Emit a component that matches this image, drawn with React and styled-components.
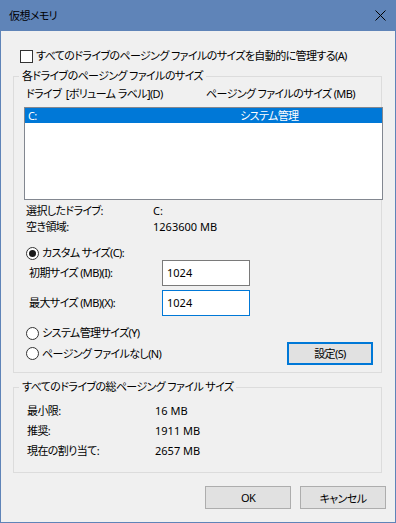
import React from 'react';
import styled, { createGlobalStyle } from 'styled-components';

const GlobalStyle = createGlobalStyle`
  body {
    margin: 0;
    background: #f0f0f0;
  }
  * {
    box-sizing: border-box;
  }
`;

const Window = styled.div`
  width: 396px;
  height: 523px;
  display: flex;
  flex-direction: column;
  background: #f0f0f0;
  border: 1px solid #5f84b8;
  border-top: none;
  font-family: "Noto Sans", "Noto Sans CJK JP", sans-serif;
  font-size: 11px;
  letter-spacing: -0.6px;
  font-feature-settings: "palt";
  color: #000;
`;

const TitleBar = styled.div`
  height: 31px;
  margin: 0 -1px;
  display: flex;
  align-items: center;
  background: #5f84b8;
  padding-left: 9px;
  padding-right: 10px;
`;

const Title = styled.span`
  line-height: 16px;
  flex: 1;
`;

const CloseIcon = () => (
  <svg width="11" height="11" viewBox="0 0 11 11">
    <path d="M0.5 0.5 L10.5 10.5 M10.5 0.5 L0.5 10.5" stroke="#000" strokeWidth="1" fill="none" />
  </svg>
);

const Body = styled.div`
  flex: 1;
  display: flex;
  flex-direction: column;
  padding: 0 9px 0 12px;
`;

const Row = styled.div`
  display: flex;
  align-items: center;
  height: ${p => p.$h || 16}px;
  margin-top: ${p => p.$mt || 0}px;
  padding-left: ${p => p.$pl || 0}px;
  line-height: 16px;
  white-space: nowrap;
`;

const CheckBox = styled.span`
  width: 13px;
  height: 13px;
  border: 1px solid #333;
  background: #fff;
  margin-right: 3px;
  flex-shrink: 0;
`;

const Radio = styled.span`
  width: 13px;
  height: 13px;
  border-radius: 50%;
  border: 1px solid #333;
  background: #fff;
  margin-right: 3px;
  flex-shrink: 0;
  display: flex;
  align-items: center;
  justify-content: center;

  &::after {
    content: '';
    width: 7px;
    height: 7px;
    border-radius: 50%;
    background: ${p => (p.$checked ? '#1a1a1a' : 'transparent')};
  }
`;

const Group = styled.fieldset`
  margin: ${p => p.$mt || 0}px 0 0 0;
  padding: 0 0 ${p => p.$pb}px 10px;
  width: 369px;
  min-width: 0;
  border: 1px solid #dcdcdc;
`;

const Legend = styled.legend`
  margin-left: -5px;
  padding: 0 3px;
  line-height: 16px;
  height: 16px;
`;

const Label = styled.span`
  width: ${p => p.$w}px;
  flex-shrink: 0;
`;

const Value = styled.span`
  letter-spacing: 0;
`;

const ListBox = styled.div`
  margin-top: 5px;
  width: 359px;
  height: 93px;
  border: 1px solid #828790;
  background: #fff;
`;

const ListItem = styled.div`
  display: flex;
  height: 15px;
  line-height: 15px;
  padding-left: 3px;
  background: ${p => (p.$selected ? '#0078d7' : 'transparent')};
  color: ${p => (p.$selected ? '#fff' : '#000')};
`;

const TextBox = styled.div`
  width: 88px;
  height: 26px;
  border: 1px solid ${p => (p.$focused ? '#0078d7' : '#7a7a7a')};
  background: #fff;
  padding-left: 4px;
  display: flex;
  align-items: center;
  letter-spacing: 0;
`;

const Button = styled.button`
  width: 86px;
  height: 23px;
  padding: 0;
  font: inherit;
  letter-spacing: inherit;
  font-feature-settings: "palt";
  color: #000;
  background: #e1e1e1;
  border: ${p => (p.$default ? '2px solid #0078d7' : '1px solid #adadad')};
  margin-left: ${p => (p.$push ? 'auto' : '0')};
  margin-right: ${p => p.$mr || 0}px;
`;

const Footer = styled.div`
  display: flex;
  justify-content: flex-end;
  gap: 9px;
  margin-top: 13px;
`;

const totals = [
  ['最小限:', '16 MB'],
  ['推奨:', '1911 MB'],
  ['現在の割り当て:', '2657 MB'],
];

export default function App() {
  return (
    <>
      <GlobalStyle />
      <Window>
        <TitleBar>
          <Title>仮想メモリ</Title>
          <CloseIcon />
        </TitleBar>
        <Body>
          <Row $mt={17} $pl={7}>
            <CheckBox />
            すべてのドライブのページング ファイルのサイズを自動的に管理する(A)
          </Row>

          <Group $mt={4} $pb={7}>
            <Legend>各ドライブのページング ファイルのサイズ</Legend>
            <Row $mt={2} $pl={2}>
              <Label $w={180}>ドライブ&nbsp;&nbsp;[ボリューム ラベル](D)</Label>
              ページング ファイルのサイズ (MB)
            </Row>
            <ListBox>
              <ListItem $selected>
                <Label $w={212}>C:</Label>
                システム管理
              </ListItem>
            </ListBox>
            <Row $mt={3} $pl={2}>
              <Label $w={127}>選択したドライブ:</Label>
              <Value>C:</Value>
            </Row>
            <Row $pl={2}>
              <Label $w={127}>空き領域:</Label>
              <Value>1263600 MB</Value>
            </Row>
            <Row $mt={11} $h={14} $pl={2}>
              <Radio $checked />
              カスタム サイズ(C):
            </Row>
            <Row $h={26} $pl={5}>
              <Label $w={133}>初期サイズ (MB)(I):</Label>
              <TextBox>1024</TextBox>
            </Row>
            <Row $mt={4} $h={26} $pl={5}>
              <Label $w={133}>最大サイズ (MB)(X):</Label>
              <TextBox $focused>1024</TextBox>
            </Row>
            <Row $mt={9} $pl={2}>
              <Radio />
              システム管理サイズ(Y)
            </Row>
            <Row $mt={1} $h={23} $pl={2}>
              <Radio />
              ページング ファイルなし(N)
              <Button $default $push $mr={8}>設定(S)</Button>
            </Row>
          </Group>

          <Group $mt={6} $pb={11}>
            <Legend>すべてのドライブの総ページング ファイル サイズ</Legend>
            {totals.map(([label, value], i) => (
              <Row key={label} $h={20} $mt={i === 0 ? 6 : 0} $pl={3}>
                <Label $w={128}>{label}</Label>
                <Value>{value}</Value>
              </Row>
            ))}
          </Group>

          <Footer>
            <Button>OK</Button>
            <Button>キャンセル</Button>
          </Footer>
        </Body>
      </Window>
    </>
  );
}
